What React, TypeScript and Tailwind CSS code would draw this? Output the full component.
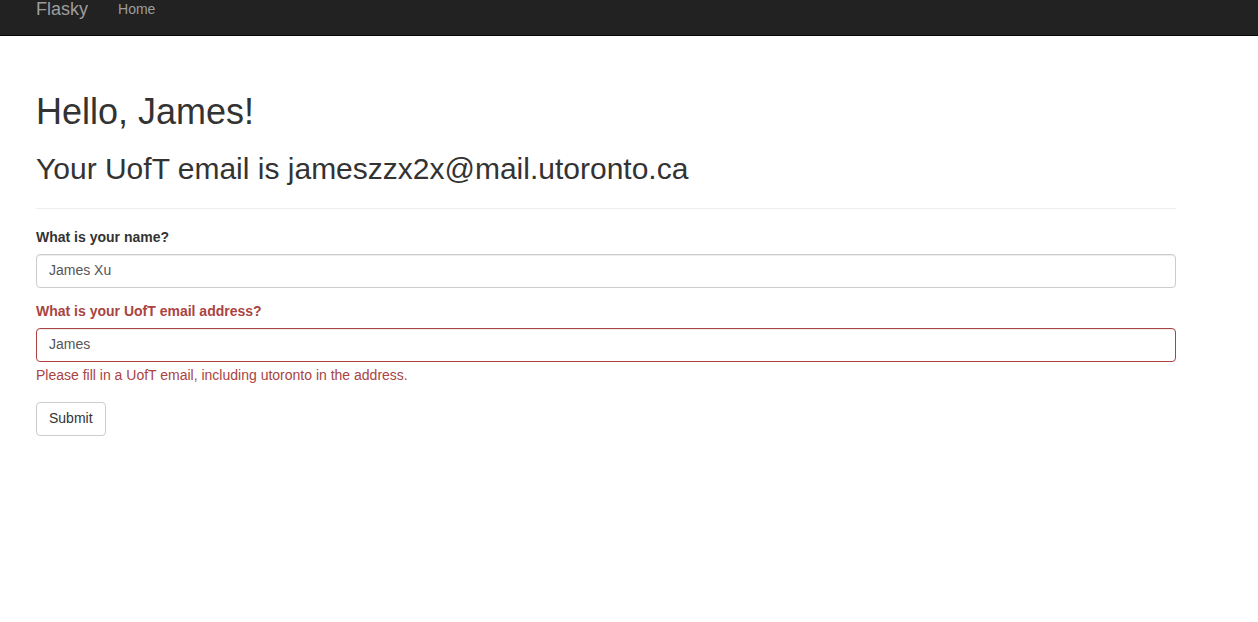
import React from 'react'

function App() {
  return (
    <div className="min-h-[622px] bg-white text-[#333] text-[14px] leading-5" style={{ fontFamily: '"Liberation Sans", Arial, Helvetica, sans-serif' }}>
      {/* Navbar */}
      <div className="h-[36px] bg-[#222] border-b border-[#080808] overflow-hidden">
        <div className="w-[1170px] ml-[21px] px-[15px] flex items-start">
          <a className="text-[18px] leading-5 text-[#9d9d9d] -mt-px pr-[15px]">Flasky</a>
          <a className="text-[14px] leading-5 text-[#9d9d9d] px-[15px] -mt-px">Home</a>
        </div>
      </div>

      {/* Content */}
      <div className="w-[1170px] ml-[21px] px-[15px]">
        <div className="mt-[56px] pb-[9px] border-b border-[#eee] mb-[20px]">
          <h1 className="text-[36px] leading-[1.1] font-normal">Hello, James!</h1>
          <h2 className="text-[30px] leading-[1.1] font-normal mt-[20px] mb-[14px]">Your UofT email is jameszzx2x@mail.utoronto.ca</h2>
        </div>

        <form onSubmit={(e) => e.preventDefault()}>
          <div className="mb-[15px]">
            <label className="block font-bold leading-4 mb-[9px]">What is your name?</label>
            <input
              defaultValue="James Xu"
              className="block w-full h-[34px] px-3 pt-[5px] pb-[7px] text-[14px] text-[#555] bg-white border border-[#ccc] rounded outline-none shadow-[inset_0_1px_1px_rgba(0,0,0,0.075)]"
            />
          </div>
          <div className="mb-[15px] pb-[2px]">
            <label className="block font-bold leading-4 mb-[9px] text-[#a94442]">What is your UofT email address?</label>
            <input
              defaultValue="James"
              className="block w-full h-[34px] px-3 pt-[5px] pb-[7px] text-[14px] text-[#555] bg-white border border-[#a94442] rounded outline-none shadow-[inset_0_1px_1px_rgba(0,0,0,0.075)]"
            />
            <span className="block mt-[3px] text-[#a94442]">Please fill in a UofT email, including utoronto in the address.</span>
          </div>
          <button
            type="submit"
            className="block px-3 pt-[5px] pb-[7px] leading-5 text-[14px] text-[#333] bg-white border border-[#ccc] rounded"
          >
            Submit
          </button>
        </form>
      </div>
    </div>
  )
}

export default App
